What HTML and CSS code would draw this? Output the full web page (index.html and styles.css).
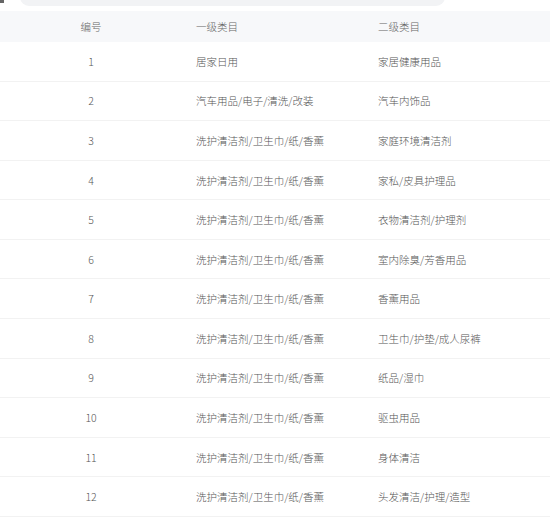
FILE: index.html
```html
<!DOCTYPE html>
<html lang="zh">
<head>
<meta charset="utf-8">
<link rel="stylesheet" href="styles.css">
</head>
<body>
<div class="toolbar">
  <div class="mark"></div>
  <div class="search"><span class="ph">请输入类目名称或编号进行搜索</span></div>
  <div class="adv">高级搜索 <span class="arr">▾</span></div>
</div>
<div class="table">
  <div class="row head">
    <div class="c1">编号</div><div class="c2">一级类目</div><div class="c3">二级类目</div>
  </div>
  <div class="row"><div class="c1">1</div><div class="c2">居家日用</div><div class="c3">家居健康用品</div></div>
  <div class="row"><div class="c1">2</div><div class="c2">汽车用品/电子/清洗/改装</div><div class="c3">汽车内饰品</div></div>
  <div class="row"><div class="c1">3</div><div class="c2">洗护清洁剂/卫生巾/纸/香薰</div><div class="c3">家庭环境清洁剂</div></div>
  <div class="row"><div class="c1">4</div><div class="c2">洗护清洁剂/卫生巾/纸/香薰</div><div class="c3">家私/皮具护理品</div></div>
  <div class="row"><div class="c1">5</div><div class="c2">洗护清洁剂/卫生巾/纸/香薰</div><div class="c3">衣物清洁剂/护理剂</div></div>
  <div class="row"><div class="c1">6</div><div class="c2">洗护清洁剂/卫生巾/纸/香薰</div><div class="c3">室内除臭/芳香用品</div></div>
  <div class="row"><div class="c1">7</div><div class="c2">洗护清洁剂/卫生巾/纸/香薰</div><div class="c3">香薰用品</div></div>
  <div class="row"><div class="c1">8</div><div class="c2">洗护清洁剂/卫生巾/纸/香薰</div><div class="c3">卫生巾/护垫/成人尿裤</div></div>
  <div class="row"><div class="c1">9</div><div class="c2">洗护清洁剂/卫生巾/纸/香薰</div><div class="c3">纸品/湿巾</div></div>
  <div class="row"><div class="c1">10</div><div class="c2">洗护清洁剂/卫生巾/纸/香薰</div><div class="c3">驱虫用品</div></div>
  <div class="row"><div class="c1">11</div><div class="c2">洗护清洁剂/卫生巾/纸/香薰</div><div class="c3">身体清洁</div></div>
  <div class="row"><div class="c1">12</div><div class="c2">洗护清洁剂/卫生巾/纸/香薰</div><div class="c3">头发清洁/护理/造型</div></div>
</div>
</body>
</html>
```
FILE: styles.css
```css
* { box-sizing: border-box; }
html, body { margin: 0; padding: 0; background: #fff; }
body {
  font-family: "Noto Sans CJK SC", "Noto Sans", sans-serif;
  font-size: 10.5px;
  font-weight: 300;
  color: #555;
  overflow: hidden;
  width: 550px;
  height: 521px;
}
.toolbar {
  display: flex;
  align-items: center;
  height: 28px;
  margin-top: -22px;
}
.mark {
  width: 4px;
  height: 3px;
  background: #666;
  align-self: flex-end;
  margin-bottom: 3px;
}
.search {
  margin-left: 16px;
  width: 425px;
  height: 28px;
  background: #f2f3f5;
  border-radius: 9px;
  display: flex;
  align-items: center;
  padding-left: 28px;
}
.ph { color: #c0c4cc; font-size: 10px; }
.adv {
  margin-left: 42px;
  color: #b0b8c8;
  font-size: 10px;
}
.arr { color: #999; }
.table { margin-top: 5px; }
.row {
  display: grid;
  grid-template-columns: 182px 182px 1fr;
  align-items: center;
  height: 39.58px;
  border-bottom: 1px solid #f2f2f2;
}
.row.head {
  height: 31px;
  background: #f7f8fa;
  border-bottom: none;
  color: #666;
}
.c1 { text-align: center; }
.c2 { padding-left: 14px; }
.c3 { padding-left: 14px; }
```
